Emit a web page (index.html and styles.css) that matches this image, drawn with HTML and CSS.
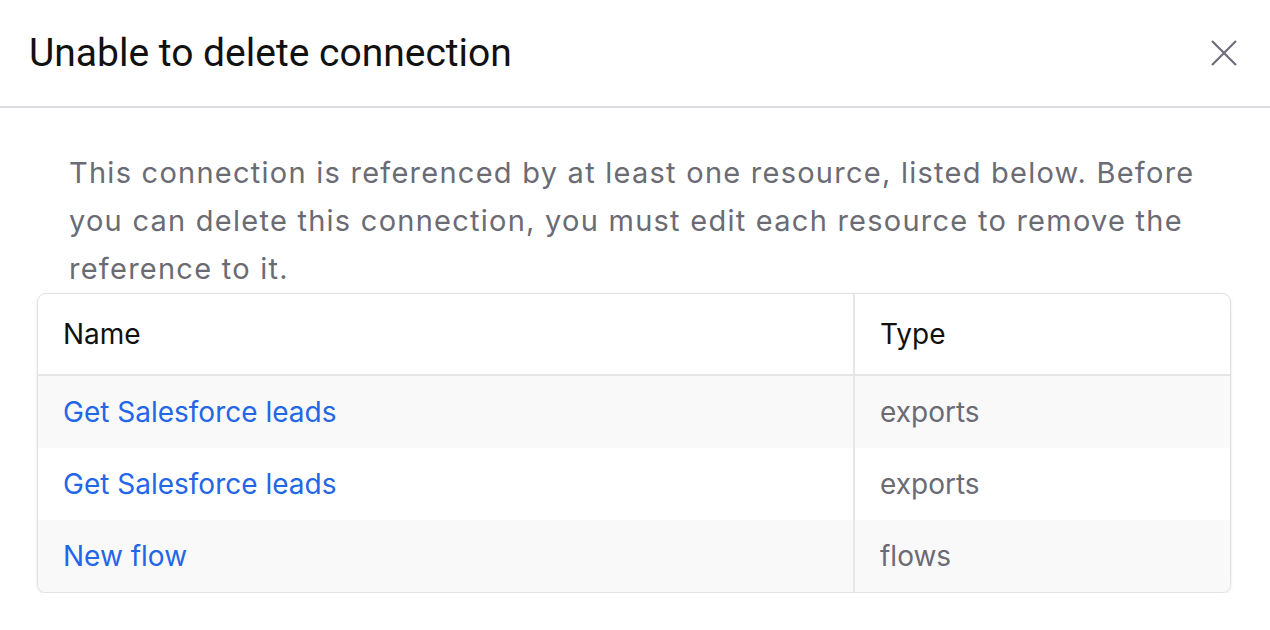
FILE: index.html
```html
<!DOCTYPE html>
<html lang="en">
<head>
    <meta charset="UTF-8">
    <meta name="viewport" content="width=device-width, initial-scale=1.0">
    <title>Unable to delete connection</title>
    <link rel="stylesheet" href="styles.css">
</head>
<body>
    <div class="dialog">
        <div class="dialog-header">
            <h1>Unable to delete connection</h1>
            <button class="close-btn" aria-label="Close">
                <svg width="26" height="26" viewBox="0 0 26 26">
                    <path d="M1 1 L25 25 M25 1 L1 25" stroke="#6e6e76" stroke-width="2.2" fill="none"/>
                </svg>
            </button>
        </div>

        <div class="dialog-body">
            <p class="message">This connection is referenced by at least one resource, listed below. Before you can delete this connection, you must edit each resource to remove the reference to it.</p>

            <div class="table-wrap">
                <table>
                    <colgroup>
                        <col class="col-name">
                        <col>
                    </colgroup>
                    <thead>
                        <tr>
                            <th>Name</th>
                            <th>Type</th>
                        </tr>
                    </thead>
                    <tbody>
                        <tr>
                            <td><a href="#">Get Salesforce leads</a></td>
                            <td class="type">exports</td>
                        </tr>
                        <tr>
                            <td><a href="#">Get Salesforce leads</a></td>
                            <td class="type">exports</td>
                        </tr>
                        <tr>
                            <td><a href="#">New flow</a></td>
                            <td class="type">flows</td>
                        </tr>
                    </tbody>
                </table>
            </div>
        </div>
    </div>
</body>
</html>
```

FILE: styles.css
```css
body {
    margin: 0;
    background-color: white;
    font-family: Inter, "Noto Sans", sans-serif;
    color: #111;
}
.dialog {
    width: 1270px;
}
.dialog-header {
    display: flex;
    align-items: center;
    justify-content: space-between;
    height: 108px;
    padding: 0 33px 0 29px;
    border-bottom: 2px solid #dcdce0;
    box-sizing: border-box;
}
.dialog-header h1 {
    margin: 0;
    font-family: Roboto, Arial, sans-serif;
    font-size: 39px;
    font-weight: 400;
    color: #111;
}
.close-btn {
    background: none;
    border: none;
    padding: 0;
    width: 26px;
    height: 26px;
    cursor: pointer;
}
.dialog-body {
    padding: 41px 39px 0 37px;
}
.message {
    margin: 0;
    padding: 0 0 0 32px;
    font-size: 29px;
    line-height: 48px;
    letter-spacing: 1.25px;
    color: #6b6b74;
}
.table-wrap {
    border: 1px solid #e2e2e2;
    border-radius: 9px;
    overflow: hidden;
    box-shadow: 0 1px 3px rgba(0,0,0,0.12);
}
table {
    width: 100%;
    border-collapse: collapse;
    font-size: 28px;
}
.col-name {
    width: 816px;
}
th {
    height: 80px;
    padding: 0 25px;
    text-align: left;
    font-weight: 400;
    color: #111;
    border-bottom: 2px solid #e6e6e6;
}
td {
    height: 72px;
    padding: 0 25px;
}
th + th, td + td {
    border-left: 2px solid #e6e6e6;
}
tbody tr:nth-child(odd) {
    background-color: #f9f9f9;
}
td a {
    color: #2366e6;
    text-decoration: none;
}
.type {
    color: #6b6b74;
}
```
